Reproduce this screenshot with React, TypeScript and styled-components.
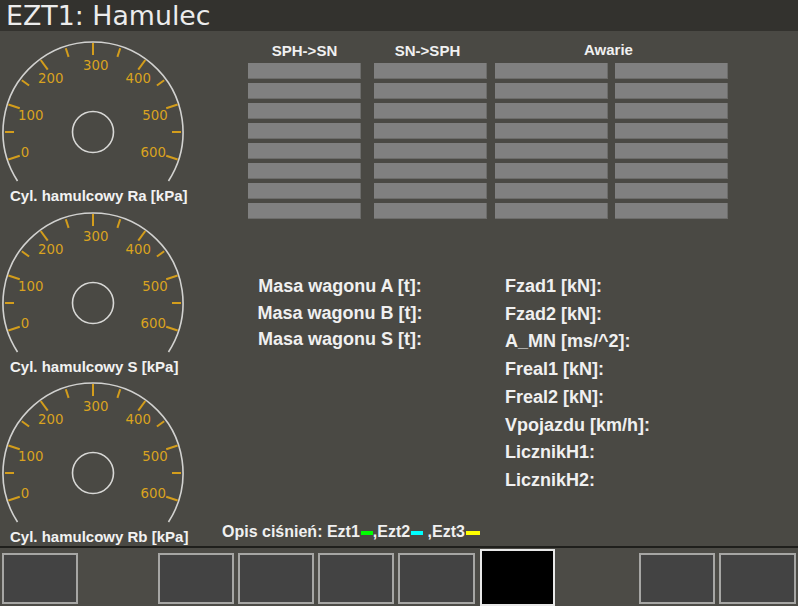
import React from "react";
import styled, { createGlobalStyle } from "styled-components";

const Global = createGlobalStyle`
  html, body { margin: 0; padding: 0; background: #4a4944; }
  body { width: 798px; height: 606px; overflow: hidden; }
  #root { width: 798px; height: 606px; }
`;

const Screen = styled.div`
  width: 798px;
  height: 606px;
  display: flex;
  flex-direction: column;
  background: #4a4944;
  font-family: "Liberation Sans", Arial, sans-serif;
  color: #f0f0f0;
`;

const TitleBar = styled.div`
  height: 31px;
  flex: none;
  background: #33322e;
  padding-left: 6px;
  font-family: "DejaVu Sans", sans-serif;
  font-size: 26.8px;
  line-height: 31px;
  color: #ececec;
`;

const Main = styled.div`
  flex: 1;
  display: flex;
  min-height: 0;
`;

const GaugeColumn = styled.div`
  width: 190px;
  flex: none;
  display: flex;
  flex-direction: column;
  gap: 5.5px;
  padding-top: 9px;
`;

const GaugeBlock = styled.div`
  display: flex;
  flex-direction: column;
`;

const GaugeSvg = styled.svg`
  display: block;
  width: 190px;
  height: 146px;
`;

const GaugeLabel = styled.div`
  height: 19px;
  line-height: 19px;
  padding-left: 10px;
  font-weight: bold;
  font-size: 15px;
  white-space: nowrap;
  color: #f2f2f2;
`;

const RightPanel = styled.div`
  flex: 1;
  display: flex;
  flex-direction: column;
  padding-left: 32px;
`;

const Content = styled.div`
  padding-left: 26px;
  display: flex;
  flex-direction: column;
`;

const HeaderRow = styled.div`
  display: flex;
  height: 20px;
  margin-top: 10px;
`;

const HeaderCell = styled.div<{ $w: number; $offset?: number; $shift?: number }>`
  width: ${(p) => p.$w}px;
  margin-left: ${(p) => p.$offset ?? 0}px;
  text-align: center;
  font-weight: bold;
  font-size: 15px;
  line-height: 20px;
  position: relative;
  top: ${(p) => p.$shift ?? 0}px;
  color: #f0f0f0;
`;

const Table = styled.div`
  display: flex;
  margin-top: 2px;
`;

const Column = styled.div<{ $w: number; $offset?: number }>`
  width: ${(p) => p.$w}px;
  margin-left: ${(p) => p.$offset ?? 0}px;
  display: flex;
  flex-direction: column;
  gap: 4px;
`;

const Cell = styled.div`
  height: 16px;
  background: #808080;
  box-shadow: inset -1px -1px 0 #6c6c6a;
`;

const InfoRow = styled.div`
  display: flex;
  margin-top: 54px;
`;

const InfoLeft = styled.div`
  width: 184px;
  text-align: center;
  font-weight: bold;
  font-size: 18px;
  line-height: 26.7px;
  white-space: nowrap;
`;

const InfoRight = styled.div`
  margin-left: 73px;
  font-weight: bold;
  font-size: 18px;
  line-height: 27.7px;
  white-space: nowrap;
`;

const Legend = styled.div`
  margin-top: auto;
  margin-bottom: 4px;
  height: 20px;
  line-height: 20px;
  font-weight: bold;
  font-size: 16px;
  white-space: nowrap;
  display: flex;
  align-items: center;
`;

const Swatch = styled.span<{ $c: string; $w?: number }>`
  display: block;
  flex: none;
  width: ${(p) => p.$w ?? 12}px;
  height: 4px;
  background: ${(p) => p.$c};
  margin-top: 2px;
  margin-left: 1px;
`;

const Separator = styled.div`
  height: 2px;
  flex: none;
  background: #1f1f1c;
`;

const BottomBar = styled.div`
  height: 58px;
  flex: none;
  display: flex;
  align-items: flex-start;
  padding-top: 5px;
  padding-left: 2px;
  box-sizing: border-box;
  background: #4c4b46;
  overflow: hidden;
`;

const SoftKey = styled.div<{ $offset?: number; $w?: number }>`
  width: ${(p) => p.$w ?? 76}px;
  height: 51px;
  margin-left: ${(p) => p.$offset ?? 4}px;
  box-sizing: border-box;
  border: 2px solid #a6a6a4;
  background: #434343;
  flex: none;
`;

const ActiveKey = styled.div<{ $offset?: number }>`
  width: 75px;
  height: 57px;
  margin-top: -4px;
  margin-left: ${(p) => p.$offset ?? 4}px;
  box-sizing: border-box;
  border: 2px solid #e8e8e8;
  background: #000;
  flex: none;
`;

const CX = 93;
const CY = 92;

const labelPos: [string, number, number][] = [
  ["0", -68, 20.3],
  ["100", -62.3, -17],
  ["200", -42.3, -53.7],
  ["300", 2.7, -67],
  ["400", 45.3, -53.7],
  ["500", 62, -17],
  ["600", 60.3, 20.3],
];

function Gauge({ label }: { label: string }) {
  const ticks = Array.from({ length: 13 }, (_, i) => {
    const a = ((-108 + 18 * i) * Math.PI) / 180;
    const major = i % 2 === 0;
    const r1 = major ? 89 : 88;
    const r2 = major ? 77 : 79;
    return {
      x1: CX + r1 * Math.sin(a),
      y1: CY - r1 * Math.cos(a),
      x2: CX + r2 * Math.sin(a),
      y2: CY - r2 * Math.cos(a),
    };
  });
  const sa = (-123 * Math.PI) / 180;
  const ea = (123 * Math.PI) / 180;
  const sx = CX + 90 * Math.sin(sa);
  const sy = CY - 90 * Math.cos(sa);
  const ex = CX + 90 * Math.sin(ea);
  const ey = CY - 90 * Math.cos(ea);
  return (
    <GaugeBlock>
      <GaugeSvg viewBox="0 0 190 146">
        <path
          d={`M ${sx} ${sy} A 90 90 0 1 1 ${ex} ${ey}`}
          fill="none"
          stroke="#d2d2d0"
          strokeWidth={1.6}
        />
        {ticks.map((t, i) => (
          <line key={i} {...t} stroke="#d39d1c" strokeWidth={2} />
        ))}
        {labelPos.map(([txt, dx, dy]) => (
          <text
            key={txt}
            x={CX + dx}
            y={CY + dy}
            textAnchor="middle"
            dominantBaseline="central"
            fontFamily="DejaVu Sans, sans-serif"
            fontSize={13.3}
            fill="#d9a31f"
          >
            {txt}
          </text>
        ))}
        <circle cx={CX} cy={CY} r={20.5} fill="none" stroke="#d8d8d6" strokeWidth={1.6} />
      </GaugeSvg>
      <GaugeLabel>{label}</GaugeLabel>
    </GaugeBlock>
  );
}

const rows = Array.from({ length: 8 }, (_, i) => i);

const columns: { w: number; offset: number }[] = [
  { w: 113, offset: 0 },
  { w: 113, offset: 13 },
  { w: 113, offset: 8 },
  { w: 113, offset: 7 },
];

export default function App() {
  return (
    <Screen>
      <Global />
      <TitleBar>EZT1: Hamulec</TitleBar>
      <Main>
        <GaugeColumn>
          <Gauge label="Cyl. hamulcowy Ra [kPa]" />
          <Gauge label="Cyl. hamulcowy S [kPa]" />
          <Gauge label="Cyl. hamulcowy Rb [kPa]" />
        </GaugeColumn>
        <RightPanel>
          <Content>
            <HeaderRow>
              <HeaderCell $w={113}>SPH-&gt;SN</HeaderCell>
              <HeaderCell $w={113} $offset={10}>SN-&gt;SPH</HeaderCell>
              <HeaderCell $w={233} $offset={8} $shift={-1}>Awarie</HeaderCell>
            </HeaderRow>
            <Table>
              {columns.map((c, ci) => (
                <Column key={ci} $w={c.w} $offset={c.offset}>
                  {rows.map((r) => (
                    <Cell key={r} />
                  ))}
                </Column>
              ))}
            </Table>
            <InfoRow>
              <InfoLeft>
                <div>Masa wagonu A [t]:</div>
                <div>Masa wagonu B [t]:</div>
                <div>Masa wagonu S [t]:</div>
              </InfoLeft>
              <InfoRight>
                <div>Fzad1 [kN]:</div>
                <div>Fzad2 [kN]:</div>
                <div>A_MN [ms/^2]:</div>
                <div>Freal1 [kN]:</div>
                <div>Freal2 [kN]:</div>
                <div>Vpojazdu [km/h]:</div>
                <div>LicznikH1:</div>
                <div>LicznikH2:</div>
              </InfoRight>
            </InfoRow>
          </Content>
          <Legend>
            <span>Opis ciśnień: Ezt1</span>
            <Swatch $c="#00ff00" />
            <span>,Ezt2</span>
            <Swatch $c="#00ffff" />
            <span>&nbsp;,Ezt3</span>
            <Swatch $c="#ffff00" $w={14} />
          </Legend>
        </RightPanel>
      </Main>
      <Separator />
      <BottomBar>
        <SoftKey $offset={0} />
        <SoftKey $offset={80} />
        <SoftKey />
        <SoftKey />
        <SoftKey $w={77} />
        <ActiveKey $offset={5} />
        <SoftKey $offset={84} />
        <SoftKey $w={77} />
      </BottomBar>
    </Screen>
  );
}
